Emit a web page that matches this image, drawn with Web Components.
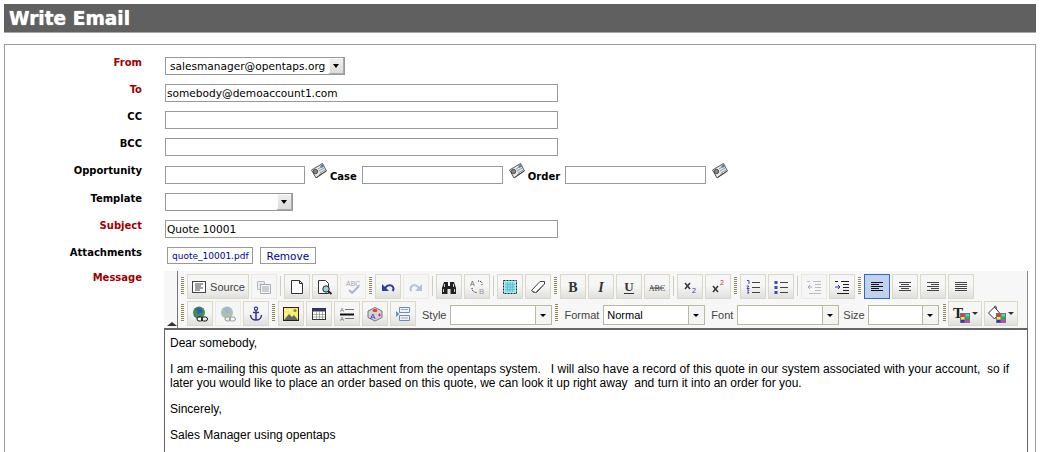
<!DOCTYPE html>
<html>
<head>
<meta charset="utf-8">
<title>Write Email</title>
<style>
  html, body { margin: 0; padding: 0; background: #fff; overflow: hidden; }
  body { font-family: "DejaVu Sans", Verdana, sans-serif; height: 452px; }
</style>
</head>
<body>
<email-page>
  <page-title>Write Email</page-title>
  <form-box>
    <form-row label="From" required><select-field width="180" value="salesmanager@opentaps.org"></select-field></form-row>
    <form-row label="To" required><text-field width="393" value="somebody@demoaccount1.com"></text-field></form-row>
    <form-row label="CC"><text-field width="393"></text-field></form-row>
    <form-row label="BCC" style="margin-bottom:10px"><text-field width="393"></text-field></form-row>
    <form-row label="Opportunity" style="--label-top:-2px">
      <text-field width="140"></text-field><lookup-icon></lookup-icon>
      <inline-label>Case</inline-label><text-field width="141"></text-field><lookup-icon></lookup-icon>
      <inline-label>Order</inline-label><text-field width="141"></text-field><lookup-icon></lookup-icon>
    </form-row>
    <form-row label="Template"><select-field width="128"></select-field></form-row>
    <form-row label="Subject" required><text-field width="393" value="Quote 10001"></text-field></form-row>
    <form-row label="Attachments"><file-chip>quote_10001.pdf</file-chip><file-chip button>Remove</file-chip></form-row>
    <form-row label="Message" required editor style="--label-top:0px">
      <rich-editor>
        <p>Dear somebody,</p>
        <p>I am e-mailing this quote as an attachment from the opentaps system. &nbsp; I will also have a record of this quote in our system associated with your account, &nbsp;so if later you would like to place an order based on this quote, we can look it up right away &nbsp;and turn it into an order for you.</p>
        <p>Sincerely,</p>
        <p>Sales Manager using opentaps</p>
      </rich-editor>
    </form-row>
  </form-box>
</email-page>

<script>
class EmailPage extends HTMLElement {
  constructor() {
    super();
    this.attachShadow({ mode: "open" }).innerHTML = `
    <style>:host { display: block; padding: 4px 5px 0 4px; }</style>
    <slot></slot>`;
  }
}

class PageTitle extends HTMLElement {
  constructor() {
    super();
    this.attachShadow({ mode: "open" }).innerHTML = `
    <style>
      :host {
        display: block;
        height: 28px;
        background: #606060;
        border-bottom: 1px solid #aaa;
        color: #fff;
        font: bold 18.6px/29px "DejaVu Sans", sans-serif;
        padding-left: 5px;
        text-shadow: 0 0 1px #fff;
      }
    </style>
    <slot></slot>`;
  }
}

class FormBox extends HTMLElement {
  constructor() {
    super();
    this.attachShadow({ mode: "open" }).innerHTML = `
    <style>
      :host {
        display: block;
        margin-top: 11px;
        border: 1px solid #999;
        border-bottom: 0;
        height: 408px;
        padding-top: 12px;
        box-sizing: border-box;
      }
    </style>
    <slot></slot>`;
  }
}

class FormRow extends HTMLElement {
  constructor() {
    super();
    const label = this.getAttribute("label");
    const color = this.hasAttribute("required") ? "#a00000" : "#000";
    this.attachShadow({ mode: "open" }).innerHTML = `
    <style>
      :host { display: grid; grid-template-columns: 137px 1fr; column-gap: 23px; margin-bottom: 9px; min-height: 18px; }
      .label { text-align: right; font: bold 10px/13px "DejaVu Sans", sans-serif; color: ${color}; margin-top: var(--label-top, -1px); }
      .body { display: flex; align-items: flex-start; }
      :host([editor]) { margin-top: -3px; }
    </style>
    <div class="label">${label}</div>
    <div class="body"><slot></slot></div>`;
  }
}

class TextField extends HTMLElement {
  constructor() {
    super();
    const w = this.getAttribute("width");
    const v = this.getAttribute("value") || "";
    this.attachShadow({ mode: "open" }).innerHTML = `
    <style>
      :host { display: block; flex: none; width: ${w}px; height: 18px; box-sizing: border-box; border: 1px solid #999; background: #fff;
        font: 10.6px/16px "DejaVu Sans", sans-serif; color: #000; padding-left: 1px; white-space: nowrap; overflow: hidden; }
    </style>${v}`;
  }
}

class SelectField extends HTMLElement {
  constructor() {
    super();
    const w = this.getAttribute("width");
    const v = this.getAttribute("value") || "";
    this.attachShadow({ mode: "open" }).innerHTML = `
    <style>
      :host { display: flex; flex: none; width: ${w}px; height: 18px; box-sizing: border-box; border: 1px solid #999; background: #fff;
        font: 10.6px/16px "DejaVu Sans", sans-serif; color: #000; }
      .val { flex: 1; padding-left: 4px; white-space: nowrap; overflow: hidden; }
      .btn { flex: none; width: 15px; background: linear-gradient(to bottom, #f0f0f0, #dcdcdc); border-right: 1px solid #aaa; border-bottom: 1px solid #aaa; box-shadow: inset 1px 1px 0 #fafafa; position: relative; box-sizing: border-box; }
      .btn::after { content: ""; position: absolute; left: 4px; top: 6px; border: 3px solid transparent; border-top: 4px solid #000; border-bottom: 0; }
    </style>
    <div class="val">${v}</div><div class="btn"></div>`;
  }
}

class LookupIcon extends HTMLElement {
  constructor() {
    super();
    this.attachShadow({ mode: "open" }).innerHTML = `
    <style>:host { display: block; flex: none; width: 16px; height: 16px; margin: -3px 0 0 6px; }</style>
    <svg width="16" height="16" viewBox="0 0 16 16">
      <path d="M.5 7 11.500.5 15.500 8 5 15z" fill="#e4e8e4" stroke="#333" stroke-width=".8"/>
      <path d="M7 6l5-3M8 8l5-3M9 10l5-3M8 12l3-2" stroke="#777" stroke-width=".7"/>
      <path d="M9 3l3-2 1.500 2-3 2z" fill="#5a7fb0"/>
      <circle cx="4.500" cy="8.500" r="2.200" fill="#888" stroke="#222" stroke-width=".7"/>
      <path d="M5.500 14.500 15 8" stroke="#333" stroke-width=".8"/>
    </svg>`;
  }
}

class InlineLabel extends HTMLElement {
  constructor() {
    super();
    this.attachShadow({ mode: "open" }).innerHTML = `
    <style>:host { display: block; flex: none; font: bold 10px/13px "DejaVu Sans", sans-serif; margin: 4px 5px 0 3px; }</style>
    <slot></slot>`;
  }
}

class FileChip extends HTMLElement {
  constructor() {
    super();
    this.attachShadow({ mode: "open" }).innerHTML = `
    <style>
      :host { display: block; flex: none; box-sizing: border-box; height: 17px; margin-left: 2px; padding: 0 3px 0 4px; border: 1px solid #999;
        font: 9px/16px "DejaVu Sans", sans-serif; color: #000099; background: #fff; }
      :host([button]) { margin-left: 7px; font-size: 10.500px; padding: 0 6px; }
    </style>
    <slot></slot>`;
  }
}

const PALETTE = `<path d="M8 8h10v10H8z" fill="#777"/>
  <path d="M9 9h3.500v2.500H9z" fill="#f03030"/><path d="M13.500 9H17v2.500h-3.500z" fill="#30e0e0"/>
  <path d="M9 12h3.500v2.500H9z" fill="#f0f030"/><path d="M13.500 12H17v2.500h-3.500z" fill="#30b030"/>
  <path d="M9 15h3.500v2.500H9z" fill="#3030e0"/><path d="M13.500 15H17v2.500h-3.500z" fill="#e030e0"/>`;

// toolbar glyphs: 16x16 box, the two colour pickers use 18x18
const ICONS = {
  source: `<rect x="1.500" y="2.500" width="13" height="11" fill="#fff" stroke="#444"/><path d="M4 5h8M4 7h6M4 9h8M4 11h5" stroke="#444"/>`,
  paste: `<path d="M1.500 2.500h7v8h-7z" fill="#e8e8e8" stroke="#bbb"/><path d="M4.500 5.500h10v9h-10z" fill="#f4f4f4" stroke="#aab"/><path d="M6 8h7M6 10h7M6 12h7" stroke="#9ab"/>`,
  page: `<path d="M2.500 1.500h8l3 3v10h-11z" fill="#fff" stroke="#333"/><path d="M10.500 1.500v3h3" fill="none" stroke="#333"/>`,
  preview: `<path d="M1.500 1.500h7l3 3v10h-10z" fill="#fff" stroke="#333"/><circle cx="9" cy="10" r="3.200" fill="#9fd4d8" stroke="#222"/><path d="M11 12l3.500 3" stroke="#222" stroke-width="2"/>`,
  spell: `<text x="1" y="7" font-family="Liberation Sans" font-size="7" fill="#a8a8a8">ABC</text><path d="M4 11l3 3 7-7" fill="none" stroke="#a8b0d8" stroke-width="1.800"/>`,
  undo: `<path d="M5 10C6 6 11 5 13 8c1 1.700.5 3-.5 4" fill="none" stroke="#2a3f9f" stroke-width="2"/><path d="M2 5v7h7z" fill="#2a3f9f"/>`,
  redo: `<path d="M11 10C10 6 5 5 3 8c-1 1.700-.5 3 .5 4" fill="none" stroke="#b4c0dc" stroke-width="2"/><path d="M14 5v7H7z" fill="#b4c0dc"/>`,
  find: `<path d="M1 15V9l2-6h4v4h2V3h4l2 6v6h-5.500V10h-3v5z" fill="#222"/><path d="M3.500 5v3M12.500 5v3M2.500 10v3M13.500 10v3" stroke="#ccc"/>`,
  replace: `<text x="1" y="7" font-family="Liberation Sans" font-size="7" fill="#666">A</text><text x="10" y="15" font-family="Liberation Sans" font-size="8" fill="#999">B</text><path d="M9 2c4 0 5 2 3.500 5M3 9c0 3 2 4.500 5 4.500" fill="none" stroke="#222" stroke-dasharray="1 1"/>`,
  selectall: `<rect x="1.500" y="1.500" width="13" height="13" fill="#a8f0ec" stroke="#222" stroke-dasharray="2 1"/><rect x="3" y="3" width="10" height="10" fill="#7fe8e4"/><path d="M5.500 3v10M8 3v10M10.500 3v10M3 5.500h10M3 8h10M3 10.500h10" stroke="#6fa8d0" stroke-width=".7"/>`,
  eraser: `<path d="M1.500 11.500 10 2.500h4.500V5L6.500 13.500h-3z" fill="#fff" stroke="#444"/><path d="M1.500 11.500l4 2 8-8" fill="none" stroke="#777"/>`,
  bold: `<text x="8" y="13" text-anchor="middle" font-family="Liberation Serif" font-weight="bold" font-size="14" fill="#333">B</text>`,
  italic: `<text x="8" y="13" text-anchor="middle" font-family="Liberation Serif" font-weight="bold" font-style="italic" font-size="14" fill="#333">I</text>`,
  underline: `<text x="8" y="12" text-anchor="middle" font-family="Liberation Serif" font-weight="bold" font-size="13" fill="#333">U</text><path d="M3 14.500h10" stroke="#333"/>`,
  strike: `<text x="8" y="11.500" text-anchor="middle" font-family="Liberation Serif" font-size="8" fill="#444">ABC</text><path d="M1 9h14" stroke="#444"/>`,
  sub: `<path d="M3 4l5 6M8 4l-5 6" stroke="#333" stroke-width="1.500"/><text x="10" y="14" font-family="Liberation Sans" font-size="7" fill="#33a">2</text>`,
  sup: `<path d="M3 7l5 6M8 7l-5 6" stroke="#333" stroke-width="1.500"/><text x="10" y="6" font-family="Liberation Sans" font-size="7" fill="#c33">2</text>`,
  ol: `<path d="M7 3.500h8M7 8.500h8M7 13.500h8" stroke="#444"/><path d="M2 1.500h2v3.500M1.500 7H4L2 9.500h2.500M2 11h2l-1 1.500 1 1.500H2" fill="none" stroke="#44b"/>`,
  ul: `<path d="M7 3.500h8M7 8.500h8M7 13.500h8" stroke="#444"/><path d="M1.500 2h3v3h-3zM1.500 7h3v3h-3zM1.500 12h3v3h-3z" fill="#44b"/>`,
  outdent: `<path d="M7 2.500h8M9 5.500h6M9 8.500h6M9 11.500h6M3 14.500h12M1 2.500h3" stroke="#bbb"/><path d="M6 8H3M4 6 2 8l2 2" stroke="#9ab" fill="none"/>`,
  indent: `<path d="M7 2.500h8M9 5.500h6M9 8.500h6M9 11.500h6M3 14.500h12M1 2.500h3" stroke="#222"/><path d="M1 8h4M4 6l2 2-2 2" stroke="#33a" fill="none"/>`,
  left: `<path d="M2 3.500h12M2 5.500h8M2 7.500h12M2 9.500h8M2 11.500h12" stroke="#111"/>`,
  center: `<path d="M2 3.500h12M4 5.500h8M2 7.500h12M4 9.500h8M2 11.500h12" stroke="#444"/>`,
  right: `<path d="M2 3.500h12M6 5.500h8M2 7.500h12M6 9.500h8M2 11.500h12" stroke="#444"/>`,
  justify: `<path d="M2 3.500h12M2 5.500h12M2 7.500h12M2 9.500h12M2 11.500h12" stroke="#444"/>`,
  link: `<circle cx="7" cy="6.500" r="6" fill="#3f8f4f"/><path d="M3 3c2 1 3 3 2 5 2 0 3-2 5-1 1-2-1-5-3-5z" fill="#3357c8"/><path d="M2 9c1 2 2 3 4 3" stroke="#3357c8" fill="none"/><rect x="5" y="11" width="5.500" height="4" rx="2" fill="#fff" stroke="#111"/><rect x="9.500" y="11" width="6" height="4" rx="2" fill="none" stroke="#111"/>`,
  unlink: `<circle cx="7" cy="6.500" r="6" fill="#a8c4ae"/><path d="M3 3c2 1 3 3 2 5 2 0 3-2 5-1 1-2-1-5-3-5z" fill="#a4b2d4"/><rect x="5" y="11" width="5.500" height="4" rx="2" fill="#eee" stroke="#999"/><rect x="9.500" y="11" width="6" height="4" rx="2" fill="none" stroke="#999"/>`,
  anchor: `<circle cx="8" cy="2.800" r="1.600" fill="none" stroke="#33339f" stroke-width="1.200"/><path d="M8 4.500V14M5 6.500h6" stroke="#33339f" stroke-width="1.500"/><path d="M2.500 9c0 3 2.500 5 5.500 5s5.500-2 5.500-5" fill="none" stroke="#33339f" stroke-width="1.500"/>`,
  image: `<rect x=".5" y="1.500" width="15" height="13" fill="#f5ee70" stroke="#222"/><circle cx="12" cy="4.500" r="1.600" fill="#a8801f"/><path d="M2 8l2 1M6 4l2 1M3 4l1 1" stroke="#fff"/><path d="M1 14l5-6 3 3 2-2 4 5z" fill="#666"/>`,
  table: `<rect x="1.500" y="2.500" width="13" height="11" fill="#fff" stroke="#333"/><path d="M2 3h12v2.500H2z" fill="#33336f"/><path d="M2 8.500h12M2 11h12M5.500 5v8M8.500 5v8M11.500 5v8" stroke="#888" stroke-width=".7"/>`,
  rule: `<text x="1" y="5.500" font-family="Liberation Sans" font-size="6" fill="#667">A</text><text x="1" y="15" font-family="Liberation Sans" font-size="6" fill="#667">A</text><path d="M6 3.500h9M6 12.500h9" stroke="#777"/><path d="M1 8.500h14" stroke="#111" stroke-width="2"/>`,
  special: `<path d="M8 1.500 15 5v6.500L8 15 1 11.500V5z" fill="#d4d4d4" stroke="#777"/><ellipse cx="8" cy="4.500" rx="2.500" ry="1.500" fill="#e33"/><text x="3" y="12.500" font-family="Liberation Sans" font-size="8" fill="#33c">A</text><path d="M11 9h3M12.500 7.500v3" stroke="#a3a"/>`,
  pagebreak: `<path d="M4.500 1.500h10v5h-10zM4.500 9.500h10v5h-10z" fill="#eef2f8" stroke="#6f8fa8"/><path d="M6 3.500h7M6 12h7" stroke="#9ab"/><path d="M1 5 4.500 8 1 11z" fill="#59c"/>`,
  textcolor: `<text x="1" y="13" font-family="Liberation Serif" font-weight="bold" font-size="15" fill="#222">T</text>${PALETTE}`,
  bgcolor: `<path d="M.5 8l6-6 5 6-5 6z" fill="#fff" stroke="#333"/><path d="M6 2c2-2 3 0 2 2" fill="none" stroke="#333"/>${PALETTE}`
};

class ToolButton extends HTMLElement {
  constructor() {
    super();
    const icon = ICONS[this.getAttribute("icon")];
    const drop = this.hasAttribute("drop");
    const box = drop ? 18 : 16;
    this.attachShadow({ mode: "open" }).innerHTML = `
    <style>
      :host {
        display: flex; flex: none; align-items: center; justify-content: center; gap: 3px;
        box-sizing: border-box; width: 26px; height: 25px; margin-right: 2px;
        border: 1px solid #dcd8c8;
        background: linear-gradient(to bottom, #f6f6f6 45%, #e0e0de);
        font: 11px/14px "Liberation Sans", sans-serif; color: #444;
      }
      :host([off]) { border-color: #eceae0; background: #f6f6f6; }
      :host([on]) { border-color: #316ac5; background: #c1d2ee; }
      :host([wide]) { width: 62px; }
      :host([drop]) { width: 34px; gap: 2px; }
      svg { display: block; overflow: visible; }
      .arrow { border: 3px solid transparent; border-top: 3px solid #333; border-bottom: 0; }
    </style>
    <svg width="${box}" height="${box}" viewBox="0 0 ${box} ${box}">${icon}</svg>
    <slot></slot>
    ${drop ? '<span class="arrow"></span>' : ""}`;
  }
}

class ToolSep extends HTMLElement {
  constructor() {
    super();
    this.attachShadow({ mode: "open" }).innerHTML = `
    <style>
      :host { display: block; flex: none; width: 1px; height: 20px; margin: 2px 3px 0 1px; background: #cfcdc4; }
      :host([grip]) { width: 3px; height: 18px; margin-top: 3px; background: repeating-linear-gradient(to bottom, #8f8a5a 0 1px, transparent 1px 2px); }
      :host([first]) { margin-left: 0; }
    </style>`;
  }
}

class ToolCombo extends HTMLElement {
  constructor() {
    super();
    const v = this.getAttribute("value") || "";
    const w = this.getAttribute("width");
    const label = this.getAttribute("label");
    const gap = this.getAttribute("gap") || 4;
    this.attachShadow({ mode: "open" }).innerHTML = `
    <style>
      :host { display: flex; flex: none; align-items: center; box-sizing: border-box; height: 25px; padding-top: 3px; font: 11px/14px "Liberation Sans", sans-serif; color: #444; }
      .label { margin-right: ${gap}px; }
      .box { box-sizing: border-box; width: ${w}px; height: 20px; display: flex; border: 1px solid #b9b9a0; background: #fff; }
      .val { flex: 1; padding-left: 3px; color: #000; line-height: 18px; }
      .btn { flex: none; width: 15px; background: #f4f4f2; border-left: 1px solid #b9b9a0; position: relative; }
      .btn::after { content: ""; position: absolute; left: 4px; top: 8px; border: 3px solid transparent; border-top: 3px solid #000; border-bottom: 0; }
    </style>
    <span class="label">${label}</span>
    <div class="box"><div class="val">${v}</div><div class="btn"></div></div>`;
  }
}

class RichEditor extends HTMLElement {
  constructor() {
    super();
    this.attachShadow({ mode: "open" }).innerHTML = `
    <style>
      :host { display: block; width: 864px; margin-left: -1px; position: relative; }
      .bars { background: #f7f7f7; height: 57px; box-sizing: border-box; padding: 3px 0 0 17px; border-right: 1px solid #888; position: relative; }
      .line { position: absolute; left: 13px; top: 0; bottom: 0; width: 1px; background: #777; }
      .collapse { position: absolute; left: 3px; bottom: 2px; border: 5px solid transparent; border-bottom: 4px solid #333; border-top: 0; }
      .row { display: flex; height: 25px; margin-bottom: 2px; }
      .content { box-sizing: border-box; height: 125px; border: 1px solid #666; border-top: 2px solid #666; border-bottom: 0; background: #fff;
        padding: 6px 4px 0 5px; font: 12px/14px "Liberation Sans", sans-serif; color: #000; }
      ::slotted(p) { margin: 0 0 12px; }
    </style>
    <div class="bars">
      <div class="line"></div>
      <div class="collapse"></div>
      <div class="row">
        <tool-sep grip first></tool-sep>
        <tool-button icon="source" wide>Source</tool-button>
        <tool-button icon="paste" off></tool-button>
        <tool-sep></tool-sep>
        <tool-button icon="page"></tool-button>
        <tool-button icon="preview"></tool-button>
        <tool-button icon="spell" off></tool-button>
        <tool-sep grip></tool-sep>
        <tool-button icon="undo"></tool-button>
        <tool-button icon="redo" off></tool-button>
        <tool-sep></tool-sep>
        <tool-button icon="find"></tool-button>
        <tool-button icon="replace"></tool-button>
        <tool-sep></tool-sep>
        <tool-button icon="selectall"></tool-button>
        <tool-button icon="eraser"></tool-button>
        <tool-sep grip></tool-sep>
        <tool-button icon="bold"></tool-button>
        <tool-button icon="italic"></tool-button>
        <tool-button icon="underline"></tool-button>
        <tool-button icon="strike"></tool-button>
        <tool-sep></tool-sep>
        <tool-button icon="sub"></tool-button>
        <tool-button icon="sup"></tool-button>
        <tool-sep grip></tool-sep>
        <tool-button icon="ol"></tool-button>
        <tool-button icon="ul"></tool-button>
        <tool-sep></tool-sep>
        <tool-button icon="outdent" off></tool-button>
        <tool-button icon="indent"></tool-button>
        <tool-sep grip></tool-sep>
        <tool-button icon="left" on></tool-button>
        <tool-button icon="center"></tool-button>
        <tool-button icon="right"></tool-button>
        <tool-button icon="justify"></tool-button>
      </div>
      <div class="row">
        <tool-sep grip first></tool-sep>
        <tool-button icon="link"></tool-button>
        <tool-button icon="unlink" off></tool-button>
        <tool-button icon="anchor"></tool-button>
        <tool-sep grip></tool-sep>
        <tool-button icon="image"></tool-button>
        <tool-button icon="table"></tool-button>
        <tool-button icon="rule"></tool-button>
        <tool-button icon="special"></tool-button>
        <tool-button icon="pagebreak"></tool-button>
        <tool-combo label="Style" width="102" style="margin-left:4px"></tool-combo>
        <tool-sep grip style="margin-left:3px;margin-right:6px"></tool-sep>
        <tool-combo label="Format" width="102" value="Normal"></tool-combo>
        <tool-combo label="Font" width="102" style="margin-left:6px"></tool-combo>
        <tool-combo label="Size" width="71" gap="3" style="margin-left:4px"></tool-combo>
        <tool-sep grip style="margin-left:4px;margin-right:2px"></tool-sep>
        <tool-button icon="textcolor" drop></tool-button>
        <tool-button icon="bgcolor" drop></tool-button>
      </div>
    </div>
    <div class="content"><slot></slot></div>`;
  }
}

customElements.define("email-page", EmailPage);
customElements.define("page-title", PageTitle);
customElements.define("form-box", FormBox);
customElements.define("form-row", FormRow);
customElements.define("text-field", TextField);
customElements.define("select-field", SelectField);
customElements.define("lookup-icon", LookupIcon);
customElements.define("inline-label", InlineLabel);
customElements.define("file-chip", FileChip);
customElements.define("tool-button", ToolButton);
customElements.define("tool-sep", ToolSep);
customElements.define("tool-combo", ToolCombo);
customElements.define("rich-editor", RichEditor);
</script>
</body>
</html>
